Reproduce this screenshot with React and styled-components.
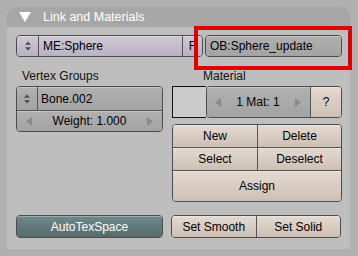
import React from 'react';
import styled, { createGlobalStyle, css } from 'styled-components';

const Global = createGlobalStyle`
  html, body { margin: 0; padding: 0; background: #b0b0b0; }
  body {
    width: 358px; height: 256px; overflow: hidden;
    font-family: "Liberation Sans", Arial, sans-serif;
    font-size: 12px; color: #000;
  }
  * { box-sizing: border-box; }
`;

const tones = {
  lavender: css`background: linear-gradient(#cec7d5, #bab2c2);`,
  gray: css`background: linear-gradient(#b0b0b0, #a3a3a3);`,
  beige: css`background: linear-gradient(#e4dad1, #cdbfb3);`,
  teal: css`background: linear-gradient(#6f898c, #566a6d); color: #fff;`,
};

const Page = styled.div`
  padding: 7px 0 0 7px;
`;

const Panel = styled.div`
  position: relative;
  width: 343px;
  height: 242px;
  background: #bebebe;
  border-radius: 9px 9px 0 0;
  display: flex;
  flex-direction: column;
`;

const Header = styled.div`
  height: 22px;
  background: #a6a6a6;
  border-radius: 9px 9px 0 0;
  display: flex;
  align-items: center;
  padding-left: 12px;
  gap: 12px;
  color: #fff;
  font-size: 12.5px;
`;

const Body = styled.div`
  flex: 1;
  display: flex;
  flex-direction: column;
  padding: 8px 8px 11px 9px;
`;

const Row = styled.div`
  display: flex;
  gap: ${p => p.$gap || 0}px;
  margin-top: ${p => p.$mt || 0}px;
`;

const Column = styled.div`
  width: ${p => p.$w}px;
  display: flex;
  flex-direction: column;
`;

const Label = styled.div`
  height: 14px;
  line-height: 14px;
  margin: 0 0 3px ${p => p.$indent}px;
  color: #111;
`;

const Group = styled.div`
  display: ${p => (p.$grid ? 'grid' : 'flex')};
  flex-direction: ${p => (p.$vertical ? 'column' : 'row')};
  grid-template-columns: 1fr 1fr;
  grid-template-rows: 22px 23px 31px;
  width: ${p => (p.$w ? `${p.$w}px` : 'auto')};
  height: ${p => (p.$h ? `${p.$h}px` : 'auto')};
  border: 1px solid #4c4c4c;
  border-radius: 4px;
  overflow: hidden;
  flex: ${p => (p.$grow ? 1 : 'none')};
`;

const Cell = styled.div`
  ${p => tones[p.$tone || 'gray']}
  display: flex;
  align-items: center;
  justify-content: ${p => p.$justify || 'center'};
  gap: 4px;
  padding: ${p => p.$pad || '0'};
  width: ${p => (p.$w ? `${p.$w}px` : 'auto')};
  height: ${p => (p.$h ? `${p.$h}px` : 'auto')};
  flex: ${p => (p.$grow ? 1 : 'none')};
  border-left: ${p => (p.$bl ? '1px solid #555' : 'none')};
  border-top: ${p => (p.$bt ? '1px solid #555' : 'none')};
  grid-column: ${p => (p.$span ? '1 / span 2' : 'auto')};
  box-shadow: inset 0 1px 0 rgba(255, 255, 255, 0.3);
  white-space: nowrap;
  overflow: hidden;
`;

const Text = styled.span`
  flex: 1;
  text-align: ${p => p.$align || 'center'};
`;

const Swatch = styled.div`
  width: 34px;
  height: 32px;
  background: #cbcbcb;
  border: 1.5px solid #111;
  border-right: none;
`;

const RedBox = styled.div`
  position: absolute;
  left: 187px;
  top: 19px;
  width: 158px;
  height: 44px;
  border: 4px solid #e10000;
`;

const Triangle = () => (
  <svg width="12" height="10" viewBox="0 0 12 10">
    <polygon points="0,0 12,0 6,10" fill="#fff" />
  </svg>
);

const UpDown = () => (
  <svg width="8" height="10" viewBox="0 0 8 10">
    <polygon points="4,0.5 7,3.8 1,3.8" fill="#4a4a4a" />
    <polygon points="1,6.2 7,6.2 4,9.5" fill="#4a4a4a" />
  </svg>
);

const Arrow = ({ dir }) => (
  <svg width="6" height="9" viewBox="0 0 6 9">
    <polygon
      points={dir === 'left' ? '6,0 6,9 0,4.5' : '0,0 0,9 6,4.5'}
      fill="#8a8a8a"
    />
  </svg>
);

export default function App() {
  return (
    <>
      <Global />
      <Page>
        <Panel>
          <Header>
            <Triangle />
            <span>Link and Materials</span>
          </Header>
          <Body>
            <Row $gap={2}>
              <Group $w={187} $h={22}>
                <Cell $tone="lavender" $w={21}><UpDown /></Cell>
                <Cell $tone="lavender" $grow $bl $justify="flex-start" $pad="0 0 0 4px">ME:Sphere</Cell>
                <Cell $tone="lavender" $w={20} $bl>F</Cell>
              </Group>
              <Group $grow $h={22}>
                <Cell $tone="gray" $grow $justify="flex-start" $pad="0 0 0 4px">OB:Sphere_update</Cell>
              </Group>
            </Row>

            <Row $gap={9} $mt={12}>
              <Column $w={147}>
                <Label $indent={6}>Vertex Groups</Label>
                <Group $vertical $h={46}>
                  <Row>
                    <Cell $w={20} $h={23}><UpDown /></Cell>
                    <Cell $grow $h={23} $bl $justify="flex-start" $pad="0 0 0 3px">Bone.002</Cell>
                  </Row>
                  <Cell $grow $bt $pad="0 9px">
                    <Arrow dir="left" />
                    <Text>Weight: 1.000</Text>
                    <Arrow dir="right" />
                  </Cell>
                </Group>
              </Column>

              <Column $w={170}>
                <Label $indent={31}>Material</Label>
                <Row>
                  <Swatch />
                  <Group $grow $h={32}>
                    <Cell $grow $pad="0 9px 0 8px">
                      <Arrow dir="left" />
                      <Text>1 Mat: 1</Text>
                      <Arrow dir="right" />
                    </Cell>
                    <Cell $tone="beige" $w={31} $bl>?</Cell>
                  </Group>
                </Row>
                <Row $mt={6}>
                  <Group $grid $grow>
                    <Cell $tone="beige">New</Cell>
                    <Cell $tone="beige" $bl>Delete</Cell>
                    <Cell $tone="beige" $bt>Select</Cell>
                    <Cell $tone="beige" $bt $bl>Deselect</Cell>
                    <Cell $tone="beige" $bt $span>Assign</Cell>
                  </Group>
                </Row>
              </Column>
            </Row>

            <Row $gap={8} $mt={13}>
              <Group $w={147} $h={23}>
                <Cell $tone="teal" $grow>AutoTexSpace</Cell>
              </Group>
              <Group $w={170} $h={23}>
                <Cell $tone="beige" $grow>Set Smooth</Cell>
                <Cell $tone="beige" $grow $bl>Set Solid</Cell>
              </Group>
            </Row>
          </Body>
          <RedBox />
        </Panel>
      </Page>
    </>
  );
}
